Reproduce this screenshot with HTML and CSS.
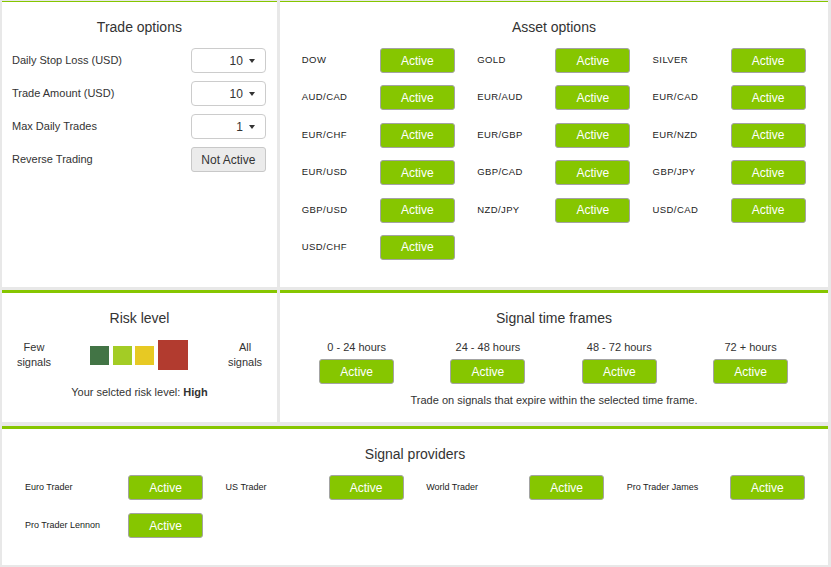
FILE: index.html
```html
<!DOCTYPE html>
<html>
<head>
<meta charset="utf-8">
<link rel="stylesheet" href="styles.css">
</head>
<body>
<div class="page">
  <div class="row top">
    <section class="panel trade">
      <h2 class="title">Trade options</h2>
      <div class="opts">
        <div class="opt"><span>Daily Stop Loss (USD)</span><div class="dd">10<i class="caret"></i></div></div>
        <div class="opt"><span>Trade Amount (USD)</span><div class="dd">10<i class="caret"></i></div></div>
        <div class="opt"><span>Max Daily Trades</span><div class="dd">1<i class="caret"></i></div></div>
        <div class="opt"><span>Reverse Trading</span><div class="btn-off">Not Active</div></div>
      </div>
    </section>
    <section class="panel assets">
      <h2 class="title">Asset options</h2>
      <div class="asset-grid">
        <div class="item"><span class="lbl">DOW</span><div class="btn">Active</div></div>
        <div class="item"><span class="lbl">GOLD</span><div class="btn">Active</div></div>
        <div class="item"><span class="lbl">SILVER</span><div class="btn">Active</div></div>
        <div class="item"><span class="lbl">AUD/CAD</span><div class="btn">Active</div></div>
        <div class="item"><span class="lbl">EUR/AUD</span><div class="btn">Active</div></div>
        <div class="item"><span class="lbl">EUR/CAD</span><div class="btn">Active</div></div>
        <div class="item"><span class="lbl">EUR/CHF</span><div class="btn">Active</div></div>
        <div class="item"><span class="lbl">EUR/GBP</span><div class="btn">Active</div></div>
        <div class="item"><span class="lbl">EUR/NZD</span><div class="btn">Active</div></div>
        <div class="item"><span class="lbl">EUR/USD</span><div class="btn">Active</div></div>
        <div class="item"><span class="lbl">GBP/CAD</span><div class="btn">Active</div></div>
        <div class="item"><span class="lbl">GBP/JPY</span><div class="btn">Active</div></div>
        <div class="item"><span class="lbl">GBP/USD</span><div class="btn">Active</div></div>
        <div class="item"><span class="lbl">NZD/JPY</span><div class="btn">Active</div></div>
        <div class="item"><span class="lbl">USD/CAD</span><div class="btn">Active</div></div>
        <div class="item"><span class="lbl">USD/CHF</span><div class="btn">Active</div></div>
      </div>
    </section>
  </div>
  <div class="row mid">
    <section class="panel risk">
      <h2 class="title">Risk level</h2>
      <div class="risk-row">
        <div class="side">Few<br>signals</div>
        <div class="sq sq1"></div>
        <div class="sq sq2"></div>
        <div class="sq sq3"></div>
        <div class="sq sq4"></div>
        <div class="side side-r">All<br>signals</div>
      </div>
      <p class="risk-sel">Your selcted risk level: <b>High</b></p>
    </section>
    <section class="panel frames">
      <h2 class="title">Signal time frames</h2>
      <div class="frame-grid">
        <div class="frame"><span>0 - 24 hours</span><div class="btn">Active</div></div>
        <div class="frame"><span>24 - 48 hours</span><div class="btn">Active</div></div>
        <div class="frame"><span>48 - 72 hours</span><div class="btn">Active</div></div>
        <div class="frame"><span>72 + hours</span><div class="btn">Active</div></div>
      </div>
      <p class="note">Trade on signals that expire within the selected time frame.</p>
    </section>
  </div>
  <section class="panel providers">
    <h2 class="title">Signal providers</h2>
    <div class="prov-grid">
      <div class="pitem"><span class="plbl">Euro Trader</span><div class="btn">Active</div></div>
      <div class="pitem"><span class="plbl">US Trader</span><div class="btn">Active</div></div>
      <div class="pitem"><span class="plbl">World Trader</span><div class="btn">Active</div></div>
      <div class="pitem"><span class="plbl">Pro Trader James</span><div class="btn">Active</div></div>
      <div class="pitem"><span class="plbl">Pro Trader Lennon</span><div class="btn">Active</div></div>
    </div>
  </section>
</div>
</body>
</html>
```
FILE: styles.css
```css
* { box-sizing: border-box; }
html, body { margin: 0; padding: 0; }
body {
  background: #e8e8e8;
  font-family: "Liberation Sans", Arial, sans-serif;
  color: #333;
  width: 831px;
  height: 567px;
  overflow: hidden;
}
.page { padding: 1px 3px 0 2px; }
.row { display: flex; gap: 3px; }
.panel { background: #fff; }
.top .panel { height: 286px; border-top: 1px solid #86c600; }
.trade { width: 275px; }
.assets { flex: 1; }
.mid { margin-top: 3px; }
.mid .panel { height: 132px; border-top: 3px solid #86c600; }
.risk { width: 275px; }
.frames { flex: 1; }
.providers { margin-top: 4px; height: 139px; border-top: 3px solid #86c600; }

.title {
  margin: 0;
  padding-top: 15px;
  font-size: 14px;
  line-height: 20px;
  font-weight: normal;
  text-align: center;
  color: #333;
}

/* Trade options */
.opts { margin-top: 11px; display: flex; flex-direction: column; gap: 8px; padding: 0 11px 0 10px; }
.opt { display: flex; justify-content: space-between; align-items: center; height: 25px; font-size: 11px; }
.opt span { position: relative; top: -1px; }
.dd {
  width: 75px; height: 25px;
  border: 1px solid #ccc; border-radius: 4px;
  display: flex; align-items: center; justify-content: flex-end;
  padding-right: 10px; font-size: 12px;
}
.caret {
  display: inline-block; margin-left: 6px;
  border-left: 3.5px solid transparent; border-right: 3.5px solid transparent;
  border-top: 4px solid #333;
}
.btn-off {
  width: 75px; height: 25px;
  border: 1px solid #c8c8c8; border-radius: 3px;
  background: #ebebeb;
  display: flex; align-items: center; justify-content: center;
  font-size: 12px;
}

/* Green buttons */
.btn {
  width: 75px; height: 25px;
  background: #86c600;
  border: 1px solid #a3a3a3;
  border-radius: 3px;
  color: #fff;
  font-size: 12px;
  display: flex; align-items: center; justify-content: center;
}

/* Assets */
.asset-grid {
  margin-top: 11px;
  padding-left: 22px;
  display: grid;
  grid-template-columns: repeat(3, 175.4px);
  row-gap: 12.4px;
}
.item { display: grid; grid-template-columns: 78px 75px; align-items: center; }
.lbl { font-size: 9.5px; letter-spacing: 0.4px; color: #222; position: relative; top: -1px; }

/* Risk */
.risk-row { margin-top: 12px; display: flex; align-items: center; height: 30px; }
.side { width: 64px; text-align: center; font-size: 11px; line-height: 15px; }
.side-r { margin-left: 25px; }
.sq { width: 19px; height: 19px; }
.sq1 { background: #427445; margin-left: 24px; }
.sq2 { background: #a3cc25; margin-left: 4px; }
.sq3 { background: #e7c923; margin-left: 3px; }
.sq4 { background: #b23b2f; width: 30px; height: 30px; margin-left: 4px; }
.risk-sel { margin: 14px 0 0; text-align: center; font-size: 11px; line-height: 16px; }

/* Frames */
.frame-grid {
  margin-top: 12px;
  padding-left: 11px;
  display: grid;
  grid-template-columns: repeat(4, 131.3px);
}
.frame { display: flex; flex-direction: column; align-items: center; font-size: 11px; line-height: 14px; }
.frame .btn { margin-top: 5px; }
.note { margin: 9px 0 0; text-align: center; font-size: 11px; line-height: 14px; }

/* Providers */
.prov-grid {
  margin-top: 11px;
  padding-left: 23px;
  display: grid;
  grid-template-columns: repeat(4, 200.6px);
  row-gap: 13px;
}
.pitem { display: grid; grid-template-columns: 103px 75px; align-items: center; }
.plbl { font-size: 9px; color: #222; position: relative; top: -1px; }
```
